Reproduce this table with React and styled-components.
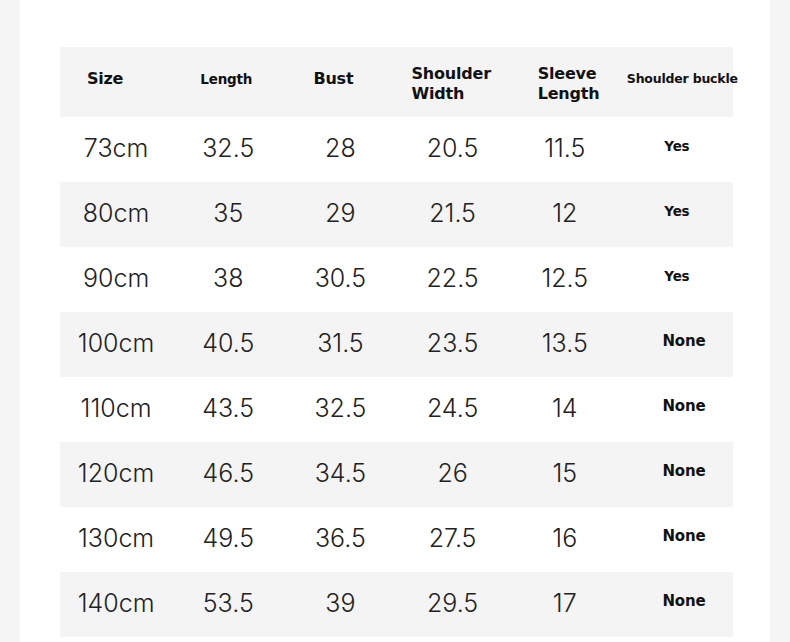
import React from 'react'
import styled, { createGlobalStyle } from 'styled-components'

const GlobalStyle = createGlobalStyle`
    html, body {
        margin: 0;
        padding: 0;
        background: #f5f5f5;
    }
`

const Page = styled.div`
    width: 790px;
    height: 642px;
    overflow: hidden;
    background: #f5f5f5;
`

const Panel = styled.div`
    margin: 0 20px;
    height: 642px;
    background: #ffffff;
    padding: 47px 37px 0 40px;
    box-sizing: border-box;
`

const Table = styled.div`
    display: grid;
    grid-template-columns: repeat(6, minmax(0, 1fr));
    width: 673px;
`

const HeaderCell = styled.div`
    height: 70px;
    background: #f4f4f4;
    display: flex;
    align-items: center;
    justify-content: ${props => (props.$left ? 'flex-start' : 'center')};
    padding: ${props => (props.$twoLine ? '4px 0 0' : '0 0 7px')};
    padding-left: ${props => props.$padLeft || 0}px;
    padding-right: ${props => props.$padRight || 0}px;
    box-sizing: border-box;
    font-family: 'DejaVu Sans', Verdana, sans-serif;
    font-weight: 700;
    font-size: ${props => props.$size || 16}px;
    line-height: 20px;
    color: #111;
    white-space: nowrap;
    letter-spacing: -0.2px;
`

const Cell = styled.div`
    height: 65px;
    background: ${props => (props.$shaded ? '#f4f4f4' : '#ffffff')};
    display: flex;
    align-items: center;
    justify-content: center;
    padding-bottom: 3px;
    box-sizing: border-box;
    font-family: Inter, 'Liberation Sans', sans-serif;
    font-weight: 300;
    font-size: 25px;
    color: #222;
`

const BadgeCell = styled(Cell)`
    padding-bottom: 7px;
    padding-left: ${props => (props.$none ? 14 : 0)}px;
    font-family: 'DejaVu Sans', Verdana, sans-serif;
    font-weight: 700;
    font-size: ${props => (props.$none ? 15 : 13.5)}px;
    color: #111;
    letter-spacing: -0.2px;
`

const headers = [
    { label: 'Size', padRight: 22 },
    { label: 'Length', size: 13.5, padRight: 4 },
    { label: 'Bust', padRight: 14 },
    { label: ['Shoulder', 'Width'], left: true, padLeft: 15 },
    { label: ['Sleeve', 'Length'], left: true, padLeft: 29 },
    { label: 'Shoulder buckle', left: true, padLeft: 6, size: 12.5 },
]

const rows = [
    ['73cm', '32.5', '28', '20.5', '11.5', 'Yes'],
    ['80cm', '35', '29', '21.5', '12', 'Yes'],
    ['90cm', '38', '30.5', '22.5', '12.5', 'Yes'],
    ['100cm', '40.5', '31.5', '23.5', '13.5', 'None'],
    ['110cm', '43.5', '32.5', '24.5', '14', 'None'],
    ['120cm', '46.5', '34.5', '26', '15', 'None'],
    ['130cm', '49.5', '36.5', '27.5', '16', 'None'],
    ['140cm', '53.5', '39', '29.5', '17', 'None'],
]

const App = () => {
    return (
        <Page>
            <GlobalStyle />
            <Panel>
                <Table>
                    {headers.map(h => (
                        <HeaderCell
                            key={String(h.label)}
                            $left={h.left}
                            $padLeft={h.padLeft}
                            $padRight={h.padRight}
                            $size={h.size}
                            $twoLine={Array.isArray(h.label)}
                        >
                            {Array.isArray(h.label) ? (
                                <span>
                                    {h.label[0]}
                                    <br />
                                    {h.label[1]}
                                </span>
                            ) : (
                                h.label
                            )}
                        </HeaderCell>
                    ))}
                    {rows.map((row, i) =>
                        row.map((value, j) =>
                            j === 5 ? (
                                <BadgeCell key={`${i}-${j}`} $shaded={i % 2 === 1} $none={value === 'None'}>
                                    {value}
                                </BadgeCell>
                            ) : (
                                <Cell key={`${i}-${j}`} $shaded={i % 2 === 1}>
                                    {value}
                                </Cell>
                            )
                        )
                    )}
                </Table>
            </Panel>
        </Page>
    )
}

export default App
